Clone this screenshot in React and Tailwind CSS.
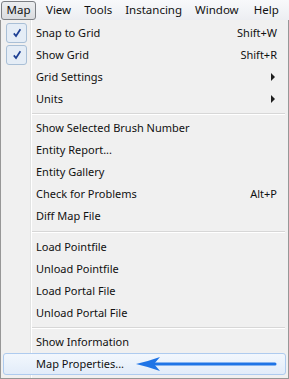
const bar = ["View", "Tools", "Instancing", "Window", "Help"];

function Check() {
  return (
    <div className="w-[21px] h-[20px] ml-[2px] flex items-center justify-center rounded-[3px] border border-[#a9bfd6] bg-[#e5edf6]">
      <svg width="10" height="10" viewBox="0 0 10 10">
        <path d="M1.8 5.4 L4 8 L8.4 1.2" fill="none" stroke="#1d3f93" strokeWidth="1.7" />
      </svg>
    </div>
  );
}

function Arrow() {
  return (
    <svg width="5" height="8" viewBox="0 0 5 8">
      <path d="M0 0 L4 4 L0 8 Z" fill="#1e1e1e" />
    </svg>
  );
}

function Item({ label, keys, check, sub, active }) {
  return (
    <div
      className={
        "relative h-[22px] flex items-center mx-[2px] " +
        (active ? "rounded-[3px] border border-[#aecbef] bg-[linear-gradient(#f2f7fd,#e2ecf9)]" : "border border-transparent")
      }
    >
      <div className="w-[32px] shrink-0">{check && <Check />}</div>
      <span className="flex-1 pt-[1px]">{label}</span>
      {keys && <span className="mr-[8px] pt-[1px]">{keys}</span>}
      {sub && (
        <span className="mr-[9px]">
          <Arrow />
        </span>
      )}
      {active && (
        <svg className="absolute left-[131px] top-[3px]" width="145" height="14" viewBox="0 0 145 14">
          <path d="M12 7 L140 7" stroke="#1f74e6" strokeWidth="3" strokeLinecap="round" />
          <path d="M1 7 Q14 4 25 0 L19 7 L25 14 Q14 10 1 7 Z" fill="#1f74e6" />
        </svg>
      )}
    </div>
  );
}

function Sep({ h }) {
  return (
    <div className={"flex flex-col justify-center " + h}>
      <div className="ml-[31px] mr-[3px] h-[1px] bg-[#d7d7d7]" />
      <div className="ml-[31px] mr-[3px] h-[1px] bg-white" />
    </div>
  );
}

export default function App() {
  return (
    <div
      className="w-[289px] h-[379px] bg-white text-[#111111] text-[11px] overflow-hidden"
      style={{ fontFamily: '"Noto Sans", "Open Sans", sans-serif' }}
    >
      <div className="h-[20px] flex items-center text-[11.5px] bg-[linear-gradient(#f8f9fb,#eceef2)]">
        <div className="ml-[1px] h-[19px] w-[35px] flex items-center justify-center rounded-[3px] border border-[#7c7f84] bg-[linear-gradient(#eceef0,#d9dbdf)]">
          Map
        </div>
        <div className="flex gap-[13px] ml-[10px]">
          {bar.map((b) => (
            <span key={b} className={b === "Help" ? "ml-[2px]" : ""}>
              {b}
            </span>
          ))}
        </div>
      </div>
      <div className="h-[359px] border border-t-0 border-[#979797] pt-[2px] bg-[linear-gradient(to_right,#f0f0f0_29px,#e2e3e3_29px,#e2e3e3_30px,#ffffff_30px,#ffffff_31px,#f0f0f0_31px)]">
        <Item label="Snap to Grid" keys="Shift+W" check />
        <Item label="Show Grid" keys="Shift+R" check />
        <Item label="Grid Settings" sub />
        <Item label="Units" sub />
        <Sep h="h-[7px]" />
        <Item label="Show Selected Brush Number" />
        <Item label="Entity Report..." />
        <Item label="Entity Gallery" />
        <Item label="Check for Problems" keys="Alt+P" />
        <Item label="Diff Map File" />
        <Sep h="h-[9px]" />
        <Item label="Load Pointfile" />
        <Item label="Unload Pointfile" />
        <Item label="Load Portal File" />
        <Item label="Unload Portal File" />
        <Sep h="h-[7px]" />
        <Item label="Show Information" />
        <Item label="Map Properties..." active />
      </div>
    </div>
  );
}
